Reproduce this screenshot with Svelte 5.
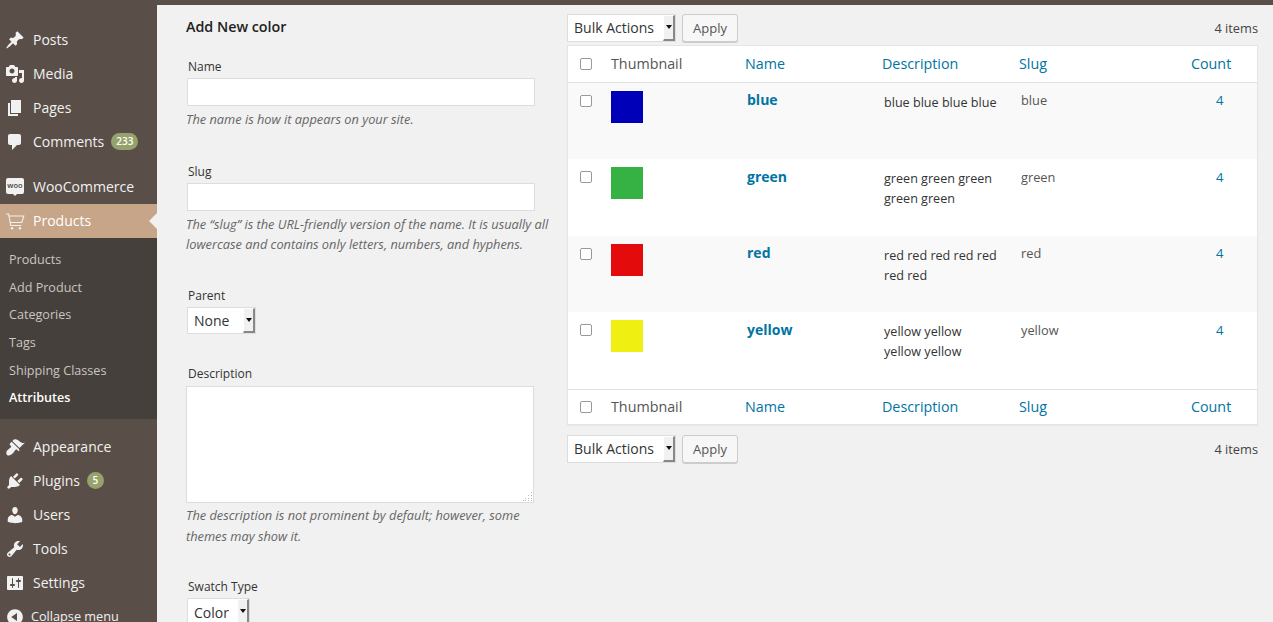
<script>
const icons = {
  posts: 'M10.44 3.02l1.82-1.82 6.36 6.35-1.83 1.82c-1.05-.68-2.48-.57-3.41.36l-.75.75c-.92.93-1.04 2.35-.35 3.41l-1.83 1.82-2.41-2.41-2.8 2.79c-.42.42-3.38 2.71-3.8 2.29s1.86-3.39 2.28-3.81l2.79-2.79L4.1 9.36l1.83-1.82c1.05.69 2.48.57 3.4-.36l.75-.75c.93-.92 1.05-2.35.36-3.41z',
  media: 'M13 11V4c0-.55-.45-1-1-1h-1.67L9 1H5L3.67 3H2c-.55 0-1 .45-1 1v7c0 .55.45 1 1 1h10c.55 0 1-.45 1-1zM7 4.5c1.38 0 2.5 1.12 2.5 2.5S8.38 9.5 7 9.5 4.5 8.38 4.5 7 5.62 4.5 7 4.5zM14 6h5v10.5c0 1.38-1.12 2.5-2.5 2.5S14 17.88 14 16.5s1.12-2.5 2.5-2.5c.17 0 .34.02.5.05V9h-3V6zm-4 8.05V13h2v3.5c0 1.38-1.12 2.5-2.5 2.5S7 17.88 7 16.5 8.12 14 9.5 14c.17 0 .34.02.5.05z',
  pages: 'M6 15V2h10v13H6zm-1 1h8v2H3V5h2v11z',
  comments: 'M5 2h9c1.1 0 2 .9 2 2v7c0 1.1-.9 2-2 2h-2l-5 5v-5H5c-1.1 0-2-.9-2-2V4c0-1.1.9-2 2-2z',
  appearance: 'M14.48 11.06L7.41 3.99l1.5-1.5c.5-.56 2.3-.47 3.51.32 1.21.8 1.43 1.28 2.91 2.1 1.18.64 2.45 1.26 4.45.85zm-.71.71L6.7 4.7 4.93 6.47c-.39.39-.39 1.02 0 1.41l1.06 1.06c.39.39.39 1.03 0 1.42-.6.6-1.43 1.11-2.21 1.69-.35.26-.7.53-1.01.84C1.43 13.71 1 15.18 1.5 16.9c.3 1 1.2 1.6 2.2 1.6 1.6 0 3-1 4.4-2.5.3-.3.6-.7.84-1 .58-.78 1.09-1.61 1.69-2.21.39-.39 1.03-.39 1.42 0l1.06 1.06c.39.39 1.02.39 1.41 0z',
  plugins: 'M13.11 4.36L9.87 7.6 8 5.73l3.24-3.24c.35-.34 1.05-.2 1.56.32.52.51.66 1.21.31 1.55zm-8 1.77l.91-1.12 9.01 9.01-1.19.84c-.71.71-2.63 1.16-3.82 1.16H6.14L4.9 17.26c-.59.59-1.54.59-2.12 0-.59-.58-.59-1.53 0-2.12l1.24-1.24v-3.88c0-1.13.4-3.19 1.09-3.89zm7.26 3.97l3.24-3.24c.34-.35 1.04-.21 1.55.31.52.51.66 1.21.31 1.55l-3.24 3.25z',
  users: 'M10 9.25c-2.27 0-2.73-3.44-2.73-3.44C7 4.02 7.82 2 9.97 2c2.16 0 2.98 2.02 2.71 3.81 0 0-.41 3.44-2.68 3.44zm0 2.57L12.72 10c2.39 0 4.52 2.33 4.52 4.53v2.49s-3.65 1.13-7.24 1.13c-3.65 0-7.24-1.13-7.24-1.13v-2.49c0-2.25 1.94-4.48 4.47-4.48z',
  tools: 'M16.68 9.77c-1.34 1.34-3.3 1.67-4.95.99l-5.41 6.52c-.99.99-2.59.99-3.58 0s-.99-2.59 0-3.57l6.52-5.42c-.68-1.65-.35-3.61.99-4.95 1.28-1.28 3.12-1.62 4.72-1.06l-2.89 2.89 2.82 2.82 2.86-2.87c.53 1.58.18 3.39-1.08 4.65zM3.81 16.21c.4.39 1.04.39 1.43 0 .4-.4.4-1.04 0-1.43-.39-.4-1.03-.4-1.43 0-.39.39-.39 1.03 0 1.43z',
  settings: 'M18 16V4c0-.55-.45-1-1-1H3c-.55 0-1 .45-1 1v12c0 .55.45 1 1 1h14c.55 0 1-.45 1-1zM8 11h1c.55 0 1 .45 1 1s-.45 1-1 1H8v1.5c0 .28-.22.5-.5.5s-.5-.22-.5-.5V13H6c-.55 0-1-.45-1-1s.45-1 1-1h1V5.5c0-.28.22-.5.5-.5s.5.22.5.5V11zm5-2h-1c-.55 0-1-.45-1-1s.45-1 1-1h1V5.5c0-.28.22-.5.5-.5s.5.22.5.5V7h1c.55 0 1 .45 1 1s-.45 1-1 1h-1v5.5c0 .28-.22.5-.5.5s-.5-.22-.5-.5V9z',
  collapse: 'M10 2.16c4.33 0 7.84 3.51 7.84 7.84s-3.51 7.84-7.84 7.84S2.16 14.33 2.16 10 5.71 2.16 10 2.16zm2 11.72V6.12L6.18 9.97z'
};

const topMenu = [
  { label: 'Posts', icon: 'posts' },
  { label: 'Media', icon: 'media' },
  { label: 'Pages', icon: 'pages' },
  { label: 'Comments', icon: 'comments', badge: '233' }
];
const lowerMenu = [
  { label: 'Appearance', icon: 'appearance' },
  { label: 'Plugins', icon: 'plugins', badge: '5' },
  { label: 'Users', icon: 'users' },
  { label: 'Tools', icon: 'tools' },
  { label: 'Settings', icon: 'settings' }
];
const subMenu = ['Products', 'Add Product', 'Categories', 'Tags', 'Shipping Classes', 'Attributes'];

const rows = [
  { name: 'blue', color: '#0000b8', desc: ['blue blue blue blue'], h: 76 },
  { name: 'green', color: '#36b244', desc: ['green green green', 'green green'], h: 77 },
  { name: 'red', color: '#e30b0b', desc: ['red red red red red', 'red red'], h: 76 },
  { name: 'yellow', color: '#eff011', desc: ['yellow yellow', 'yellow yellow'], h: 77 }
];
</script>

{#snippet menuItem(item)}
  <a class="item" href="#top">
    <svg class="ic" viewBox="0 0 20 20"><path d={icons[item.icon]} /></svg>
    <span class="lab">{item.label}</span>
    {#if item.badge}<b class="badge">{item.badge}</b>{/if}
  </a>
{/snippet}

{#snippet bulk()}
  <div class="tablenav">
    <div class="sel bulk"><span>Bulk Actions</span><i></i></div>
    <button class="apply">Apply</button>
    <span class="count-label">4 items</span>
  </div>
{/snippet}

{#snippet headRow()}
  <div class="cb"><input type="checkbox" /></div>
  <div class="c-thumb th-dark">Thumbnail</div>
  <div class="c-name th-link">Name</div>
  <div class="c-desc th-link">Description</div>
  <div class="c-slug th-link">Slug</div>
  <div class="c-count th-link">Count</div>
{/snippet}

<div class="page">
  <aside class="side">
    <nav class="group first">
      {#each topMenu as item}
        {@render menuItem(item)}
      {/each}
    </nav>
    <nav class="group woo">
      <a class="item" href="#top">
        <span class="woo-logo">woo</span>
        <span class="lab">WooCommerce</span>
      </a>
      <a class="item current" href="#top">
        <svg class="ic cart" viewBox="0 0 20 20"><path d="M1 3h2.6l2.2 11.5h10.4M4.2 5h14.6l-2 6.5H5.4" /><circle cx="7" cy="17.2" r="1.2" /><circle cx="15" cy="17.2" r="1.2" /></svg>
        <span class="lab">Products</span>
      </a>
      <div class="sub">
        {#each subMenu as s}
          <a href="#top" class:on={s === 'Attributes'}>{s}</a>
        {/each}
      </div>
    </nav>
    <nav class="group lower">
      {#each lowerMenu as item}
        {@render menuItem(item)}
      {/each}
      <a class="item collapse" href="#top">
        <svg class="ic" viewBox="0 0 20 20"><path d={icons.collapse} /></svg>
        <span class="lab">Collapse menu</span>
      </a>
    </nav>
  </aside>

  <main class="main">
    <div class="form-col">
      <h3>Add New color</h3>

      <div class="field f-name">
        <label for="tag-name">Name</label>
        <input id="tag-name" type="text" />
        <p>The name is how it appears on your site.</p>
      </div>

      <div class="field f-slug">
        <label for="tag-slug">Slug</label>
        <input id="tag-slug" type="text" />
        <p>The “slug” is the URL-friendly version of the name. It is usually all lowercase and contains only letters, numbers, and hyphens.</p>
      </div>

      <div class="field f-parent">
        <span class="lbl">Parent</span>
        <div class="sel parent"><span>None</span><i></i></div>
      </div>

      <div class="field f-desc">
        <label for="tag-desc">Description</label>
        <div class="area">
          <textarea id="tag-desc"></textarea>
          <svg class="grip" width="10" height="10" viewBox="0 0 10 10">
            <path d="M8 0h1v1H8zM5 3h1v1H5zM8 3h1v1H8zM2 6h1v1H2zM5 6h1v1H5zM8 6h1v1H8zM0 8h1v1H0zM2 8h1v1H2zM5 8h1v1H5zM8 8h1v1H8z" />
          </svg>
        </div>
        <p>The description is not prominent by default; however, some themes may show it.</p>
      </div>

      <div class="field f-swatch">
        <span class="lbl">Swatch Type</span>
        <div class="sel swatch"><span>Color</span><i></i></div>
      </div>
    </div>

    <div class="table-col">
      {@render bulk()}
      <div class="table">
        <div class="row head">{@render headRow()}</div>
        {#each rows as r, i}
          <div class="row body" class:alt={i % 2 === 0} style="height:{r.h}px">
            <div class="cb"><input type="checkbox" /></div>
            <div class="c-thumb"><div class="swatch-box" style="background:{r.color}"></div></div>
            <div class="c-name term">{r.name}</div>
            <div class="c-desc text">
              {#each r.desc as line}
                <div>{line}</div>
              {/each}
            </div>
            <div class="c-slug slug">{r.name}</div>
            <div class="c-count num">4</div>
          </div>
        {/each}
        <div class="row foot">{@render headRow()}</div>
      </div>
      {@render bulk()}
    </div>
  </main>
</div>

<style>
:global(body) {
  margin: 0;
  background: #f1f1f1;
  font-family: "Open Sans", sans-serif;
  font-size: 13px;
  color: #444;
}
.page {
  display: flex;
  height: 622px;
  overflow: hidden;
  border-top: 5px solid #5a4f48;
  box-sizing: border-box;
}
a { text-decoration: none; }

.side {
  width: 157px;
  flex: none;
  margin-top: -5px;
  background: #5a4f48;
  overflow: hidden;
}
.group.first { padding-top: 23px; }
.group.woo { padding-top: 11px; }
.group.lower { padding-top: 11px; }
.item {
  display: flex;
  align-items: center;
  height: 34px;
  color: #f1f1f1;
  font-size: 14px;
  position: relative;
}
.lab { margin: -2px 0 0 7px; }
.ic {
  width: 20px;
  height: 20px;
  margin-left: 5px;
  margin-right: 1px;
  flex: none;
  fill: #f1f1f1;
}
.cart { fill: none; stroke: #f1f1f1; stroke-width: 1.1; }
.cart circle { fill: #f1f1f1; stroke: none; }
.badge {
  margin: -1px 0 0 7px;
  height: 17px;
  min-width: 7px;
  padding: 0 5px;
  border-radius: 9px;
  background: #96a26c;
  color: #fff;
  font-size: 10px;
  font-weight: 600;
  line-height: 17px;
  text-align: center;
}
.woo-logo {
  position: relative;
  width: 18px;
  height: 16px;
  margin: -2px 2px 0 6px;
  border-radius: 2px;
  background: #f1f1f1;
  color: #444;
  font-size: 7.5px;
  font-weight: 600;
  line-height: 14px;
  text-align: center;
  flex: none;
}
.woo-logo::after {
  content: "";
  position: absolute;
  left: 7px;
  bottom: -2px;
  border: 2px solid transparent;
  border-top-color: #f1f1f1;
  border-bottom: 0;
}
.current {
  background: #c7a589;
  color: #fff;
}
.current::after {
  content: "";
  position: absolute;
  right: 0;
  top: 9px;
  border: 8px solid transparent;
  border-right-color: #f1f1f1;
  border-left: 0;
}
.sub {
  background: #46403c;
  height: 181px;
  padding-top: 8px;
  box-sizing: border-box;
}
.sub a {
  display: block;
  height: 27.7px;
  line-height: 27.7px;
  padding-left: 9px;
  font-size: 12.6px;
  color: #cbc5c1;
}
.sub a.on { color: #fff; font-weight: 600; }
.collapse { font-size: 12.7px; }
.collapse .lab { margin-left: 5px; }

.main {
  flex: 1;
  display: flex;
  min-width: 0;
}
.form-col {
  width: 372px;
  margin-left: 29px;
  flex: none;
}
h3 {
  margin: 12px 0 0;
  font-size: 14.3px;
  line-height: 20px;
  font-weight: 600;
  color: #222;
}
.field label, .lbl {
  display: block;
  margin-left: 2px;
  font-size: 12px;
  line-height: 17px;
  color: #333;
}
.field input[type="text"] {
  display: block;
  box-sizing: border-box;
  width: 348px;
  height: 28px;
  margin: 3px 0 0 1px;
  padding: 0;
  background: #fff;
  border: 1px solid #ddd;
  outline: none;
}
.field p {
  margin: 3px 0 0;
  font-size: 12.8px;
  line-height: 20px;
  font-style: italic;
  color: #666;
}
.f-name { margin-top: 21px; }
.f-slug { margin-top: 34px; }
.f-parent { margin-top: 33px; }
.f-desc { margin-top: 31px; }
.f-swatch { margin-top: 31px; }
.area {
  position: relative;
  width: 348px;
  height: 117px;
  margin: 4px 0 0;
}
textarea {
  display: block;
  box-sizing: border-box;
  width: 100%;
  height: 100%;
  background: #fff;
  border: 1px solid #ddd;
  outline: none;
  resize: none;
}
.grip {
  position: absolute;
  right: 1px;
  bottom: 1px;
  fill: #bbb;
}
.f-desc p { margin-top: 2px; line-height: 21px; }

.sel {
  box-sizing: border-box;
  display: flex;
  align-items: center;
  justify-content: space-between;
  height: 28px;
  background: #fff;
  border: 1px solid #ddd;
  font-size: 14px;
  color: #333;
  padding-left: 6px;
}
.bulk span { margin-top: -2px; }
.sel i {
  position: relative;
  width: 12px;
  height: 100%;
  box-sizing: border-box;
  background: #f1f1f1;
  border-right: 2px solid #888;
  border-bottom: 2px solid #888;
  border-top: 1px solid #fff;
  border-left: 1px solid #fff;
}
.sel i::after {
  content: "";
  position: absolute;
  left: 2px;
  top: 9px;
  border: 3px solid transparent;
  border-top: 4px solid #111;
  border-bottom: 0;
}
.parent { width: 69px; height: 27px; margin: 3px 0 0 1px; }
.swatch { width: 63px; margin: 3px 0 0 1px; }
.bulk { width: 109px; }

.table-col {
  width: 691px;
  margin-left: 9px;
  flex: none;
}
.tablenav {
  display: flex;
  align-items: center;
  height: 28px;
  margin-top: 9px;
}
.apply {
  box-sizing: border-box;
  width: 56px;
  height: 28px;
  margin-left: 6px;
  padding: 0;
  background: #f7f7f7;
  border: 1px solid #ccc;
  border-radius: 3px;
  box-shadow: 0 1px 0 #ccc;
  color: #555;
  font: 13px "Open Sans", sans-serif;
}
.count-label {
  margin-left: auto;
  font-size: 12.8px;
  color: #444;
}
.table {
  margin-top: 3px;
  background: #fff;
  border: 1px solid #e5e5e5;
  box-shadow: 0 1px 1px rgba(0, 0, 0, 0.04);
  box-sizing: border-box;
}
.table + .tablenav { margin-top: 10px; }
.row {
  display: flex;
  position: relative;
}
.head { height: 36px; align-items: center; border-bottom: 1px solid #e1e1e1; }
.foot { height: 34px; align-items: center; border-top: 1px solid #e1e1e1; }
.head, .foot { font-size: 14.3px; }
.head > div:not(.cb), .foot > div:not(.cb) { margin-top: -2px; }
.alt { background: #f9f9f9; }
.cb { width: 43px; flex: none; }
.cb input {
  appearance: none;
  display: block;
  box-sizing: border-box;
  width: 12px;
  height: 12px;
  margin: 0 0 0 12px;
  background: #fff;
  border: 1px solid #999;
  border-radius: 2px;
}
.body .cb { padding-top: 12px; }
.c-thumb { width: 134px; flex: none; }
.th-dark { color: #555; }
.th-link { color: #0074a2; }
.c-name { width: 137px; flex: none; }
.c-desc { width: 137px; flex: none; }
.c-slug { width: 172px; flex: none; }
.c-count { flex: none; }
.swatch-box { width: 32px; height: 32px; margin-top: 8px; }
.term {
  margin-left: 2px;
  width: 135px;
  padding-top: 6px;
  color: #0074a2;
  font-size: 14px;
  line-height: 22px;
  font-weight: 700;
  box-sizing: border-box;
}
.text {
  margin-left: 2px;
  width: 135px;
  padding: 10px 0 0;
  box-sizing: border-box;
  font-size: 12.6px;
  line-height: 19.5px;
  color: #333;
}
.slug { padding: 8px 0 0 2px; width: 170px; font-size: 12.8px; line-height: 19px; color: #555; }
.num { padding: 8px 0 0 25px; line-height: 19px; color: #0074a2; }
.body:not(.alt) .term { padding-top: 7px; }
.body:not(.alt) .slug, .body:not(.alt) .num { padding-top: 9px; }
</style>
